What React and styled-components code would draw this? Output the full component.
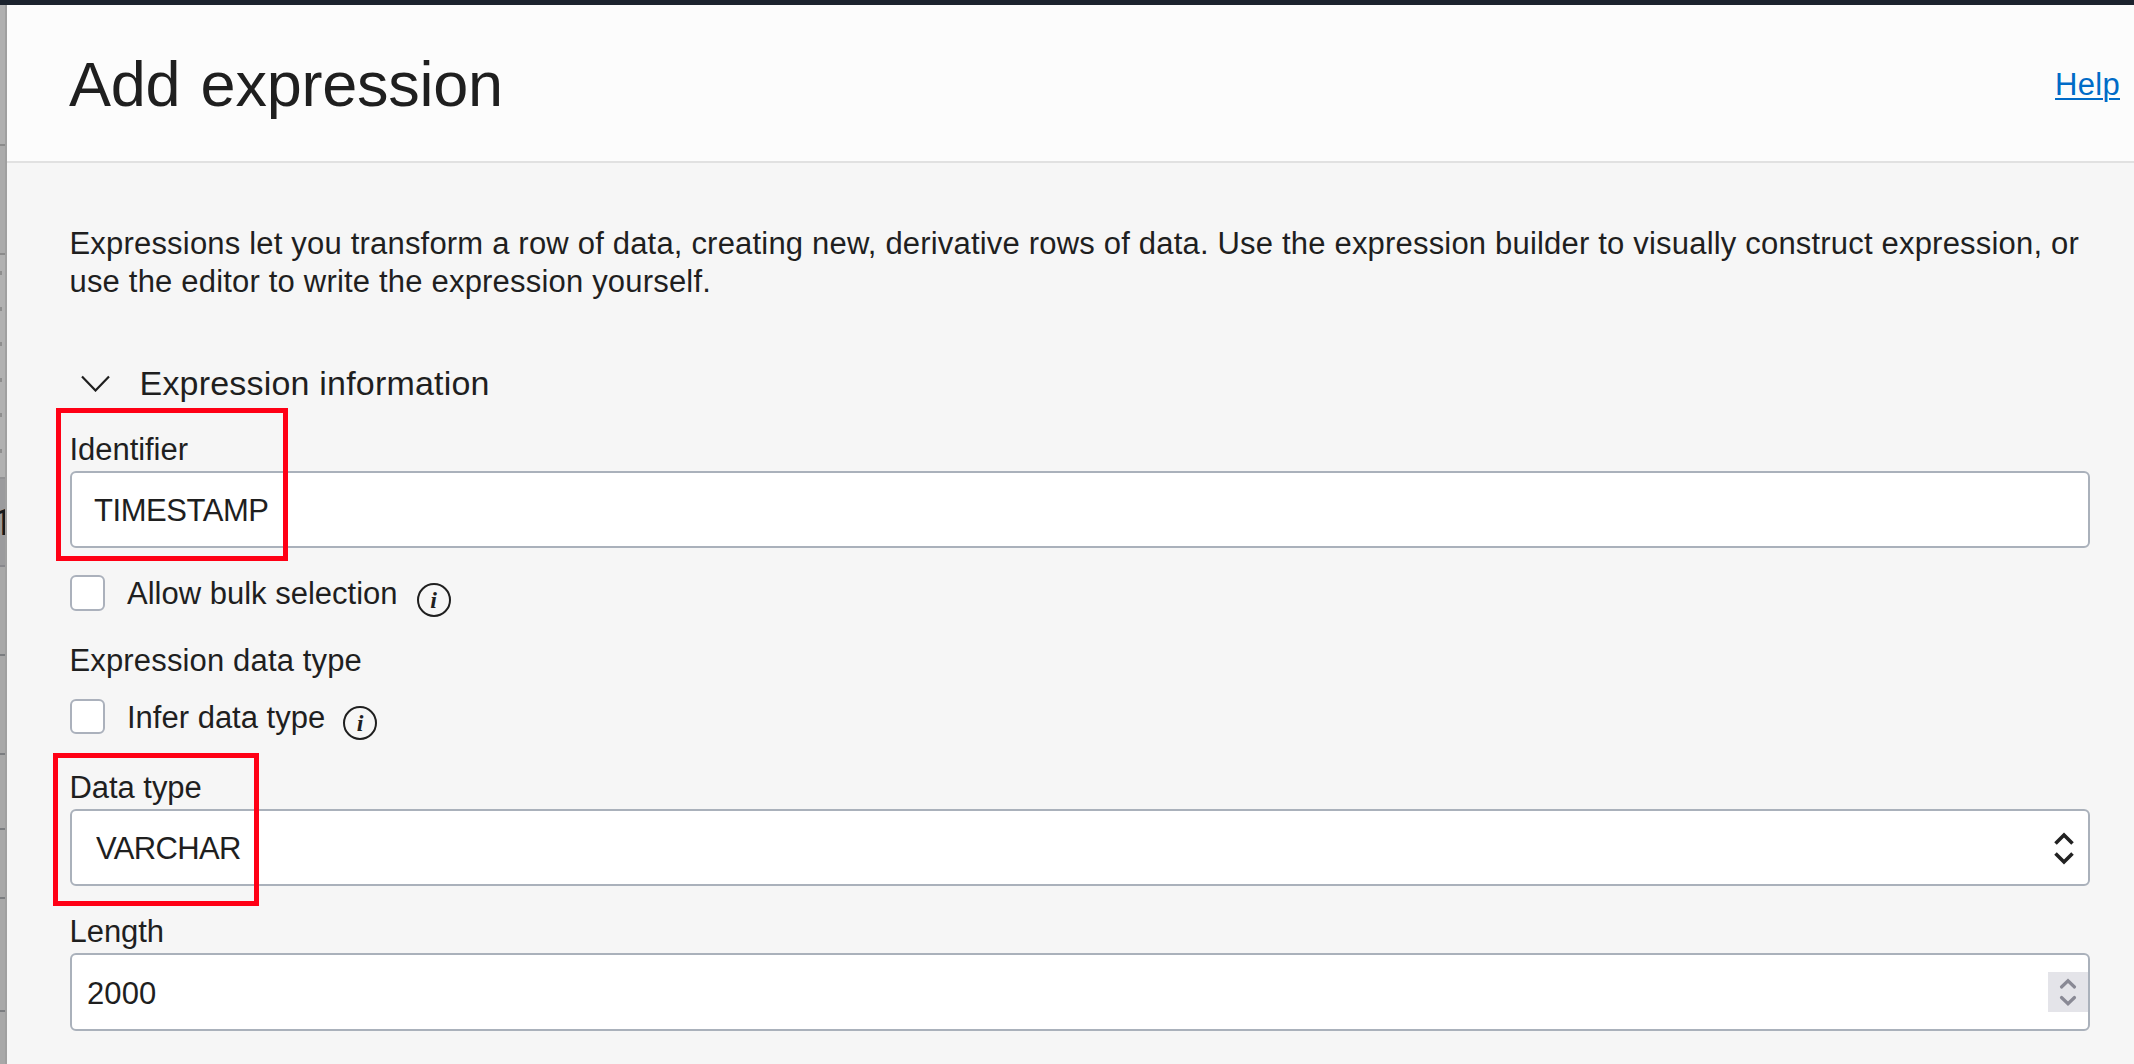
import React from "react";
import styled, { createGlobalStyle } from "styled-components";

const GlobalStyle = createGlobalStyle`
  *, *::before, *::after { box-sizing: border-box; }
  body {
    margin: 0;
    overflow: hidden;
    background: #f6f6f6;
    color: #1f1f1f;
    font-family: "Liberation Sans", "Helvetica Neue", Arial, sans-serif;
  }
`;

const Screen = styled.div`
  display: flex;
  flex-direction: column;
  height: 1064px;
`;

const TopBar = styled.div`
  flex: none;
  height: 5px;
  background: #1c232e;
`;

const Main = styled.div`
  display: flex;
  flex: 1;
  min-height: 0;
`;

/* Sliver of the dimmed page behind the panel */
const Backdrop = styled.div`
  flex: none;
  display: flex;
  flex-direction: column;
  width: 7px;
  border-right: 2px solid #a0a0a0;
  overflow: hidden;
`;

const BackdropRow = styled.div`
  flex: none;
  height: ${(p) => p.$height}px;
  background: ${(p) => p.$bg || "#a8a8a8"};
  border-bottom: 2px solid ${(p) => p.$line || "#7b7d80"};
`;

const DotsRow = styled(BackdropRow)`
  display: flex;
  flex-direction: column;
  gap: 31.6px;
  padding-top: 16px;
`;

const Dot = styled.span`
  flex: none;
  width: 2px;
  height: 4px;
  background: #8e8e8e;
`;

const DigitRow = styled(BackdropRow)`
  display: flex;
  justify-content: flex-end;
  align-items: center;
  color: #16181b;
  font-family: Roboto, "Open Sans", sans-serif;
  font-size: 36px;
  line-height: 36px;
  padding-top: 2px;
`;

const Digit = styled.span`
  margin-right: -8px;
`;

const Panel = styled.section`
  display: flex;
  flex: 1;
  flex-direction: column;
  min-width: 0;
`;

const Header = styled.header`
  flex: none;
  display: flex;
  justify-content: space-between;
  align-items: center;
  height: 158px;
  padding: 0 14px 0 62px;
  background: #fcfcfc;
  border-bottom: 2px solid #e1e1e1;
`;

const Title = styled.h1`
  margin: 0;
  font-size: 63px;
  font-weight: 400;
  line-height: 72px;
  padding-top: 2px;
  letter-spacing: -0.25px;
  word-spacing: 3px;
`;

const HelpLink = styled.a`
  color: #006bc7;
  font-size: 31px;
  line-height: 36px;
  letter-spacing: 0.3px;
  padding-top: 4px;
  text-decoration: underline;
  text-decoration-thickness: 2px;
  text-underline-offset: 3px;
`;

const Content = styled.div`
  display: flex;
  flex-direction: column;
  padding: 62px 44px 0 63px;
`;

const Intro = styled.p`
  margin: 0 0 0 -0.5px;
  font-size: 31px;
  line-height: 38px;
  letter-spacing: 0.19px;
  white-space: nowrap;
`;

const SectionToggle = styled.div`
  display: flex;
  align-items: center;
  gap: 30px;
  height: 44px;
  margin-top: 60px;
  padding-left: 10.5px;
  font-size: 34px;
  line-height: 44px;
  letter-spacing: 0.2px;
`;

const Field = styled.div`
  position: relative;
  display: flex;
  flex-direction: column;
  margin-top: ${(p) => p.$top}px;
`;

const Label = styled.label`
  height: 42px;
  margin-left: -0.5px;
  padding-top: 3px;
  font-size: 31px;
  line-height: 36px;
  letter-spacing: -0.05px;
`;

const Control = styled.div`
  display: flex;
  align-items: center;
  height: ${(p) => p.$height || 77}px;
  padding-left: ${(p) => p.$indent}px;
  background: #ffffff;
  border: 2px solid #aab1bb;
  border-radius: 6px;
`;

const Value = styled.input`
  flex: 1;
  min-width: 0;
  height: 42px;
  padding: ${(p) => p.$drop || 2}px 0 0;
  border: 0;
  outline: 0;
  background: transparent;
  color: inherit;
  font-family: inherit;
  font-size: 31px;
  letter-spacing: ${(p) => p.$tracking || 0}px;
`;

const SelectIcon = styled.svg`
  flex: none;
  margin-right: 14px;
`;

const Spinner = styled.span`
  flex: none;
  display: flex;
  align-items: center;
  justify-content: center;
  width: 40px;
  height: 40px;
  background: #e4e4e9;
`;

const CheckRow = styled.div`
  display: flex;
  align-items: flex-start;
  height: 36px;
  margin-top: ${(p) => p.$top}px;
`;

const Checkbox = styled.span`
  flex: none;
  width: 35px;
  height: ${(p) => p.$height || 35}px;
  background: #ffffff;
  border: 2px solid #abb1bc;
  border-radius: 6px;
`;

const CheckLabel = styled.span`
  margin-left: 22px;
  font-size: 31px;
  line-height: 38px;
  white-space: nowrap;
`;

const InfoBadge = styled.span`
  flex: none;
  display: flex;
  align-items: center;
  justify-content: center;
  width: 34px;
  height: 34px;
  margin: ${(p) => p.$drop}px 0 0 ${(p) => p.$gap}px;
  border: 2px solid #1f1f1f;
  border-radius: 50%;
  font: italic bold 24px/28px "Liberation Serif", "Times New Roman", serif;
`;

const GroupTitle = styled.div`
  margin: 32px 0 0 -0.5px;
  font-size: 31px;
  line-height: 36px;
  letter-spacing: 0.15px;
`;

const Highlight = styled.span`
  position: absolute;
  left: ${(p) => p.$left}px;
  top: ${(p) => p.$top}px;
  width: ${(p) => p.$width}px;
  height: 153px;
  border: 5px solid #ff0015;
  pointer-events: none;
`;

const UpDown = ({ width, height, color, stroke, up, down }) => (
  <svg width={width} height={height} viewBox={`0 0 ${width} ${height}`} fill="none" stroke={color} strokeWidth={stroke} strokeLinecap="round">
    <path d={up} />
    <path d={down} />
  </svg>
);

export default function App() {
  return (
    <Screen>
      <GlobalStyle />
      <TopBar />
      <Main>
        <Backdrop>
          <BackdropRow $height={141} $bg="#b0b0b0" $line="#8b8b8b" />
          <BackdropRow $height={109} $bg="#ababab" $line="#8b8b8b" />
          <DotsRow $height={224} $bg="#b1b1b1" $line="#929294">
            {[0, 1, 2, 3, 4, 5].map((n) => (
              <Dot key={n} />
            ))}
          </DotsRow>
          <DigitRow $height={88} $bg="#9b9b9d" $line="#88888d">
            <Digit>1</Digit>
          </DigitRow>
          <BackdropRow $height={89} />
          <BackdropRow $height={99} />
          <BackdropRow $height={75} />
          <BackdropRow $height={69} />
          <BackdropRow $height={113} />
          <BackdropRow $height={60} />
        </Backdrop>
        <Panel>
          <Header>
            <Title>Add expression</Title>
            <HelpLink href="#">Help</HelpLink>
          </Header>
          <Content>
            <Intro>
              Expressions let you transform a row of data, creating new, derivative rows of data. Use the expression builder to visually construct expression, or
              <br />
              use the editor to write the expression yourself.
            </Intro>
            <SectionToggle>
              <svg width="29" height="18" viewBox="0 0 29 18" fill="none" stroke="#1f1f1f" strokeWidth="2.2">
                <path d="M1 2.5 L14.5 16.5 L28 2.5" />
              </svg>
              <span>Expression information</span>
            </SectionToggle>
            <Field $top={24}>
              <Label htmlFor="identifier">Identifier</Label>
              <Control $indent={22}>
                <Value id="identifier" defaultValue="TIMESTAMP" $tracking={-0.45} />
              </Control>
              <Highlight $left={-14} $top={-21} $width={232} />
            </Field>
            <CheckRow $top={27}>
              <Checkbox $height={36} />
              <CheckLabel>Allow bulk selection</CheckLabel>
              <InfoBadge $gap={19} $drop={8}>i</InfoBadge>
            </CheckRow>
            <GroupTitle>Expression data type</GroupTitle>
            <CheckRow $top={20}>
              <Checkbox />
              <CheckLabel>Infer data type</CheckLabel>
              <InfoBadge $gap={18} $drop={7}>i</InfoBadge>
            </CheckRow>
            <Field $top={32}>
              <Label htmlFor="datatype">Data type</Label>
              <Control $indent={24}>
                <Value id="datatype" defaultValue="VARCHAR" readOnly $tracking={-0.65} />
                <SelectIcon width="20" height="34" viewBox="0 0 20 34" fill="none" stroke="#222" strokeWidth="3.6">
                  <path d="M1.5 12.5 L10 4 L18.5 12.5" />
                  <path d="M1.5 22.5 L10 31 L18.5 22.5" />
                </SelectIcon>
              </Control>
              <Highlight $left={-17} $top={-14} $width={206} />
            </Field>
            <Field $top={25}>
              <Label htmlFor="length">Length</Label>
              <Control $indent={15} $height={78}>
                <Value id="length" defaultValue="2000" $tracking={0.1} $drop={4} />
                <Spinner>
                  <UpDown width={18} height={30} color="#898995" stroke={3.2} up="M2.5 10 L9 3.8 L15.5 10" down="M2.5 20.5 L9 26.7 L15.5 20.5" />
                </Spinner>
              </Control>
            </Field>
          </Content>
        </Panel>
      </Main>
    </Screen>
  );
}
